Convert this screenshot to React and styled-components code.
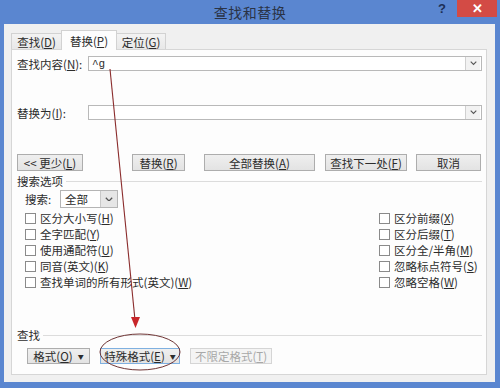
import React from "react";
import styled, { createGlobalStyle } from "styled-components";

const GlobalStyle = createGlobalStyle`
  html, body {
    margin: 0;
    padding: 0;
    background: #5a86d0;
  }
  * {
    box-sizing: border-box;
  }
`;

const Window = styled.div`
  position: relative;
  width: 500px;
  height: 388px;
  background: #5a86d0;
  display: flex;
  flex-direction: column;
  font-family: "Noto Sans CJK SC", "Liberation Sans", sans-serif;
  font-size: 11.5px;
  color: #2c2c2c;
  overflow: hidden;
`;

const TitleBar = styled.div`
  height: 24px;
  display: grid;
  grid-template-columns: 1fr auto 1fr;
  align-items: start;
`;

const Title = styled.div`
  grid-column: 2;
  font-size: 14px;
  line-height: 24px;
  color: #2a3346;
  letter-spacing: 0.5px;
`;

const Controls = styled.div`
  grid-column: 3;
  justify-self: end;
  display: flex;
  align-items: flex-start;
  margin-right: 3px;
`;

const HelpMark = styled.span`
  font-family: "Liberation Sans", sans-serif;
  font-weight: bold;
  font-size: 13px;
  color: #1d2f55;
  margin-right: 11px;
  line-height: 18px;
`;

const CloseButton = styled.div`
  width: 40px;
  height: 17px;
  background: #d34b45;
  color: #fff;
  display: flex;
  align-items: center;
  justify-content: center;
  font-family: "Liberation Sans", sans-serif;
  font-size: 13px;
  font-weight: bold;
`;

const Body = styled.div`
  height: 358px;
  margin: 0 5px 6px 4px;
  background: #f0f0f0;
  padding: 6px 8px 7px 7px;
  display: flex;
  flex-direction: column;
`;

const TabRow = styled.div`
  display: flex;
  align-items: flex-end;
  height: 19px;
  position: relative;
  z-index: 1;
`;

const Tab = styled.div`
  height: ${(p) => (p.$active ? "20px" : "16px")};
  width: ${(p) => p.$w}px;
  margin-bottom: ${(p) => (p.$active ? "-1px" : "0")};
  margin-left: ${(p) => (p.$active ? "-1px" : "0")};
  margin-right: ${(p) => (p.$active ? "-1px" : "0")};
  background: ${(p) => (p.$active ? "#fdfdfd" : "linear-gradient(#f3f3f3, #e8e8e8)")};
  border: 1px solid #d2d2d2;
  border-bottom: none;
  display: flex;
  align-items: center;
  justify-content: center;
  padding-top: ${(p) => (p.$active ? "0" : "1px")};
  position: relative;
  z-index: ${(p) => (p.$active ? 2 : 1)};
`;

const Panel = styled.div`
  flex: 1;
  background: #fdfdfd;
  border: 1px solid #d6d6d6;
  padding: 6px 4px 10px 5px;
  display: flex;
  flex-direction: column;
`;

const FieldRow = styled.div`
  display: flex;
  align-items: center;
  height: 15px;
  margin-bottom: ${(p) => p.$gap || 0}px;
`;

const FieldLabel = styled.div`
  width: 71px;
  flex-shrink: 0;
  white-space: nowrap;
`;

const Combo = styled.div`
  flex: 1;
  height: 15px;
  border: 1px solid #b9b9b9;
  background: #fff;
  display: flex;
  align-items: center;
  padding-left: 3px;
  font-family: "Liberation Mono", monospace;
  font-size: 11px;
`;

const ComboText = styled.span`
  flex: 1;
`;

const DropArrow = styled.div`
  width: 15px;
  height: 13px;
  margin-right: 1px;
  background: #f2f2f2;
  border-left: 1px solid #d0d0d0;
  display: flex;
  align-items: center;
  justify-content: center;
`;

const ButtonRow = styled.div`
  display: flex;
  height: 17px;
`;

const Button = styled.div`
  width: ${(p) => p.$w}px;
  margin-left: ${(p) => p.$ml || 0}px;
  height: 100%;
  border: 1px solid ${(p) => (p.$focus ? "#7fb0e0" : p.$disabled ? "#d5d5d5" : "#adadad")};
  background: ${(p) => (p.$disabled ? "#f4f4f4" : "linear-gradient(#efefef, #e3e3e3)")};
  color: ${(p) => (p.$disabled ? "#a8a8a8" : "#2c2c2c")};
  display: flex;
  align-items: center;
  justify-content: center;
  white-space: nowrap;
`;

const Caret = styled.span`
  font-size: 6px;
  margin-left: 5px;
`;

const SectionHead = styled.div`
  display: flex;
  align-items: center;
  height: 12px;
  margin-top: ${(p) => p.$mt || 0}px;
  &::after {
    content: "";
    flex: 1;
    height: 1px;
    background: #dcdcdc;
    margin-left: 3px;
  }
`;

const SearchRow = styled.div`
  display: flex;
  align-items: center;
  margin: 3px 0 2px 8px;
  height: 18px;
`;

const SearchLabel = styled.span`
  width: 35px;
`;

const Select = styled.div`
  width: 58px;
  height: 18px;
  border: 1px solid #b5b5b5;
  background: #fff;
  display: flex;
  align-items: center;
  padding-left: 4px;
`;

const SelectArrow = styled.div`
  width: 17px;
  height: 16px;
  background: #e6e6e6;
  border-left: 1px solid #c8c8c8;
  display: flex;
  align-items: center;
  justify-content: center;
`;

const OptionGrid = styled.div`
  display: grid;
  grid-template-columns: 354px 1fr;
  grid-auto-rows: 16px;
  margin-left: 8px;
`;

const Option = styled.label`
  display: flex;
  align-items: center;
  white-space: nowrap;
  grid-column: ${(p) => p.$col};
`;

const Box = styled.span`
  width: 11px;
  height: 11px;
  border: 1px solid #8a8a8a;
  background: #fff;
  margin-right: 4px;
  flex-shrink: 0;
`;

const BottomArea = styled.div`
  margin-top: auto;
`;

const BottomButtons = styled.div`
  display: flex;
  height: 16px;
  margin: 7px 0 0 10px;
`;

const Overlay = styled.svg`
  position: absolute;
  left: 0;
  top: 0;
  pointer-events: none;
`;

const Chevron = ({ size = 7 }) => (
  <svg width={size} height={size * 0.6} viewBox="0 0 10 6">
    <polyline points="1,1 5,5 9,1" fill="none" stroke="#555" strokeWidth="1.6" />
  </svg>
);

const M = ({ k }) => (
  <>
    (<u>{k}</u>)
  </>
);

const leftOptions = [
  ["区分大小写", "H"],
  ["全字匹配", "Y"],
  ["使用通配符", "U"],
  ["同音(英文)", "K"],
  ["查找单词的所有形式(英文)", "W"],
];

const rightOptions = [
  ["区分前缀", "X"],
  ["区分后缀", "T"],
  ["区分全/半角", "M"],
  ["忽略标点符号", "S"],
  ["忽略空格", "W"],
];

export default function App() {
  return (
    <Window>
      <GlobalStyle />
      <TitleBar>
        <Title>查找和替换</Title>
        <Controls>
          <HelpMark>?</HelpMark>
          <CloseButton>✕</CloseButton>
        </Controls>
      </TitleBar>
      <Body>
        <TabRow>
          <Tab $w={51}>
            查找<M k="D" />
          </Tab>
          <Tab $w={56} $active>
            替换<M k="P" />
          </Tab>
          <Tab $w={50}>
            定位<M k="G" />
          </Tab>
        </TabRow>
        <Panel>
          <FieldRow $gap={34}>
            <FieldLabel>
              查找内容<M k="N" />:
            </FieldLabel>
            <Combo>
              <ComboText>^g</ComboText>
              <DropArrow>
                <Chevron />
              </DropArrow>
            </Combo>
          </FieldRow>
          <FieldRow $gap={34}>
            <FieldLabel>
              替换为<M k="I" />:
            </FieldLabel>
            <Combo>
              <ComboText />
              <DropArrow>
                <Chevron />
              </DropArrow>
            </Combo>
          </FieldRow>
          <ButtonRow>
            <Button $w={66}>
              &lt;&lt; 更少<M k="L" />
            </Button>
            <Button $w={53} $ml={49}>
              替换<M k="R" />
            </Button>
            <Button $w={111} $ml={19}>
              全部替换<M k="A" />
            </Button>
            <Button $w={82} $ml={10}>
              查找下一处<M k="F" />
            </Button>
            <Button $w={65} $ml={9}>
              取消
            </Button>
          </ButtonRow>
          <SectionHead $mt={4}>搜索选项</SectionHead>
          <SearchRow>
            <SearchLabel>搜索:</SearchLabel>
            <Select>
              <ComboText>全部</ComboText>
              <SelectArrow>
                <Chevron size={8} />
              </SelectArrow>
            </Select>
          </SearchRow>
          <OptionGrid>
            {leftOptions.map(([t, k], i) => (
              <React.Fragment key={t}>
                <Option $col={1}>
                  <Box />
                  {t}
                  <M k={k} />
                </Option>
                <Option $col={2}>
                  <Box />
                  {rightOptions[i][0]}
                  <M k={rightOptions[i][1]} />
                </Option>
              </React.Fragment>
            ))}
          </OptionGrid>
          <BottomArea>
            <SectionHead>查找</SectionHead>
            <BottomButtons>
              <Button $w={63}>
                格式<M k="O" />
                <Caret>▼</Caret>
              </Button>
              <Button $w={80} $ml={10} $focus>
                特殊格式<M k="E" />
                <Caret>▼</Caret>
              </Button>
              <Button $w={82} $ml={10} $disabled>
                不限定格式<M k="T" />
              </Button>
            </BottomButtons>
          </BottomArea>
        </Panel>
      </Body>
      <Overlay width="500" height="388" viewBox="0 0 500 388">
        <line x1="110" y1="69" x2="135" y2="320" stroke="#8a2b2b" strokeWidth="1.1" />
        <polygon points="131,317 140,317 135.5,328" fill="#c8262a" />
        <ellipse cx="140" cy="352" rx="40" ry="18" fill="none" stroke="#6e3434" strokeWidth="1" />
      </Overlay>
    </Window>
  );
}
